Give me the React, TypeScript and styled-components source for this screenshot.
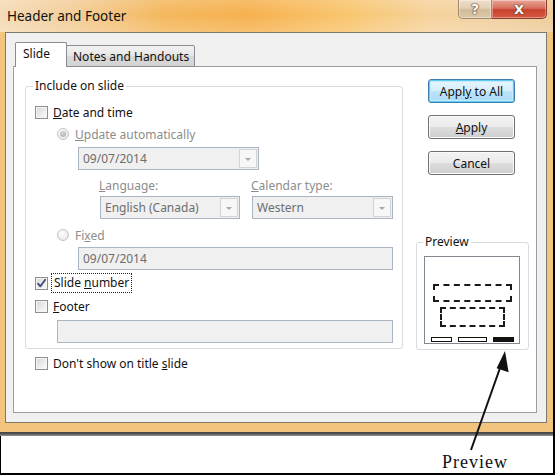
import React from 'react'
import styled, { createGlobalStyle } from 'styled-components'

const GlobalStyle = createGlobalStyle`
  html, body {
    margin: 0;
    padding: 0;
    background: #fff;
  }
  body {
    font-family: 'Noto Sans', 'Open Sans', sans-serif;
    font-size: 12px;
    color: #111;
  }
`

const Page = styled.div`
  position: relative;
  width: 555px;
  height: 475px;
  box-sizing: border-box;
  border-right: 2px solid #000;
  display: flex;
  flex-direction: column;
  background: #fff;
  overflow: hidden;
`

const Window = styled.div`
  height: 432px;
  display: flex;
  flex-direction: column;
  background: #f3c47e;
`

const TitleBar = styled.div`
  height: 32px;
  flex-shrink: 0;
  display: flex;
  align-items: flex-start;
  justify-content: space-between;
  padding-left: 7px;
  padding-right: 6px;
  background:
    linear-gradient(180deg, rgba(255, 255, 255, 0.15) 0%, rgba(255, 255, 255, 0) 45%, rgba(255, 255, 255, 0.18) 100%),
    linear-gradient(90deg, #f4dbb6 0%, #f3cf9c 12%, #f4b75c 30%, #f6b14f 45%, #f8c46c 62%, #f6d39d 78%, #f1d0a0 90%, #eecb98 100%);
`

const Title = styled.span`
  font-size: 13.5px;
  line-height: 32px;
  color: #111;
`

const CaptionButtons = styled.div`
  display: flex;
  height: 19px;
`

const CaptionButton = styled.div<{ $close?: boolean }>`
  width: ${p => (p.$close ? 55 : 34)}px;
  height: 19px;
  box-sizing: border-box;
  display: flex;
  align-items: center;
  justify-content: center;
  border: 1px solid ${p => (p.$close ? '#8e3a2c' : '#9c8a72')};
  border-top: none;
  border-left: ${p => (p.$close ? 'none' : undefined)};
  border-radius: ${p => (p.$close ? '0 0 5px 0' : '0 0 0 5px')};
  background: ${p =>
    p.$close
      ? 'linear-gradient(180deg, #e9a598 0%, #d9705d 45%, #c7412c 55%, #d65a41 100%)'
      : 'linear-gradient(180deg, #efe0cb 0%, #e2cfb3 45%, #d2bb9a 55%, #dcc8aa 100%)'};
  box-shadow: inset 0 0 0 1px rgba(255, 255, 255, 0.35);
  color: #fff;
  font-family: 'DejaVu Sans', sans-serif;
  font-weight: bold;
  font-size: ${p => (p.$close ? 13 : 14)}px;
  text-shadow: 0 0 1px #4a3a2a, 0 0 1px #4a3a2a, 0 0 2px #6a4a3a;
`

const Body = styled.div`
  flex: 1;
  display: flex;
  padding: 0 6px 9px 5px;
`

const Client = styled.div`
  flex: 1;
  display: flex;
  flex-direction: column;
  box-sizing: border-box;
  border: 1px solid #7d776c;
  background: #f0f0f0;
  padding: 9px 9px 9px 7px;
`

const Shadow = styled.div`
  height: 4px;
  background: linear-gradient(180deg, #3e3e3e 0%, #5a5a5a 50%, #9a9a9a 100%);
`

const TabStrip = styled.div`
  display: flex;
  align-items: flex-end;
  height: 25px;
  padding-left: 2px;
  position: relative;
  z-index: 1;
`

const Tab = styled.div<{ $active?: boolean }>`
  height: ${p => (p.$active ? 25 : 22)}px;
  width: ${p => (p.$active ? 52 : 129)}px;
  margin-left: ${p => (p.$active ? 0 : -1)}px;
  box-sizing: border-box;
  display: flex;
  align-items: center;
  padding: ${p => (p.$active ? '0 0 3px 7px' : '0 0 0 6px')};
  border: 1px solid #898c95;
  border-bottom: ${p => (p.$active ? 'none' : '1px solid #898c95')};
  border-radius: 2px 2px 0 0;
  background: ${p => (p.$active ? '#fff' : 'linear-gradient(180deg, #f2f2f2 0%, #e6e6e6 50%, #d9d9d9 50%, #d3d3d3 100%)')};
  position: relative;
  z-index: ${p => (p.$active ? 2 : 1)};
  color: #111;
`

const Panel = styled.div`
  flex: 1;
  margin-top: -1px;
  box-sizing: border-box;
  border: 1px solid #9a9da3;
  background: #fff;
  display: flex;
  padding: 11px 0 0 11px;
`

const LeftColumn = styled.div`
  width: 378px;
  display: flex;
  flex-direction: column;
`

const RightColumn = styled.div`
  width: 113px;
  margin-left: 13px;
  display: flex;
  flex-direction: column;
  padding-top: 1px;
`

const Group = styled.fieldset<{ $pad: number; $top?: number }>`
  margin: ${p => p.$top ?? 0}px 0 0 0;
  min-width: 0;
  box-sizing: border-box;
  border: 1px solid #d5dbe0;
  border-radius: 3px;
  padding: 0 ${p => p.$pad}px 5px ${p => p.$pad}px;
`

const GroupLabel = styled.legend<{ $shift: number }>`
  padding: 0 2px;
  margin-left: ${p => p.$shift}px;
  line-height: 16px;
  color: #111;
`

const OptionRow = styled.div<{ $top: number; $indent?: number; $disabled?: boolean }>`
  display: flex;
  align-items: center;
  gap: 5px;
  height: 20px;
  margin-top: ${p => p.$top}px;
  padding-left: ${p => p.$indent ?? 0}px;
  color: ${p => (p.$disabled ? '#8c8c8c' : '#111')};
`

const CheckBox = styled.span`
  width: 13px;
  height: 13px;
  flex-shrink: 0;
  box-sizing: border-box;
  border: 1px solid #8e8f8f;
  background: linear-gradient(135deg, #d6d6d6 0%, #ececec 55%, #fbfbfb 100%);
  box-shadow: inset 0 0 0 1px #f6f6f6;
  display: flex;
  align-items: center;
  justify-content: center;
`

const Radio = styled.span<{ $checked?: boolean }>`
  width: 12px;
  height: 12px;
  flex-shrink: 0;
  margin-right: 1px;
  box-sizing: border-box;
  border-radius: 50%;
  border: 1px solid #c4c4c4;
  background: radial-gradient(circle at 40% 35%, #fdfdfd 0%, #e4e4e4 100%);
  display: flex;
  align-items: center;
  justify-content: center;

  &::after {
    content: '';
    display: ${p => (p.$checked ? 'block' : 'none')};
    width: 6px;
    height: 6px;
    border-radius: 50%;
    background: radial-gradient(circle at 40% 35%, #d8d8d8 0%, #a8a8a8 100%);
  }
`

const FocusText = styled.span`
  outline: 1px dotted #222;
  outline-offset: 1px;
  padding: 0 1px;
  line-height: 16px;
`

const Field = styled.div<{ $width: number; $left: number; $top?: number }>`
  display: flex;
  align-items: center;
  box-sizing: border-box;
  width: ${p => p.$width}px;
  height: 23px;
  margin-left: ${p => p.$left}px;
  margin-top: ${p => p.$top ?? 0}px;
  border: 1px solid #abb4c2;
  background: #f0f0f0;
  color: #6e6e6e;
  padding: 1px 1px 1px 4px;
`

const FieldText = styled.span`
  flex: 1;
`

const ComboArrow = styled.span`
  width: 18px;
  height: 100%;
  box-sizing: border-box;
  border: 1px solid #d3d3d3;
  background: #f7f7f7;
  display: flex;
  align-items: center;
  justify-content: center;

  &::after {
    content: '';
    border-left: 3.5px solid transparent;
    border-right: 3.5px solid transparent;
    border-top: 3.5px solid #a9a9a9;
    margin-top: 1px;
  }
`

const LangGrid = styled.div`
  display: grid;
  grid-template-columns: 140px 141px;
  column-gap: 12px;
  row-gap: 2px;
  margin-left: 65px;
  margin-top: 8px;
  color: #8c8c8c;
`

const FieldLabel = styled.span`
  line-height: 16px;
  margin-left: -1px;
`

const Button = styled.div<{ $default?: boolean; $top: number }>`
  width: 87px;
  height: 24px;
  margin-left: 12px;
  margin-top: ${p => p.$top}px;
  box-sizing: border-box;
  display: flex;
  align-items: center;
  justify-content: center;
  border-radius: 3px;
  border: 1px solid ${p => (p.$default ? '#3c7fb1' : '#707070')};
  background: ${p =>
    p.$default
      ? 'linear-gradient(180deg, #e6f5fd 0%, #d6eefb 50%, #bde4f8 50%, #a9daf5 100%)'
      : 'linear-gradient(180deg, #f2f2f2 0%, #ebebeb 50%, #dddddd 50%, #cfcfcf 100%)'};
  box-shadow: ${p => (p.$default ? 'inset 0 0 0 1px #5fcbf0, inset 0 0 0 2px #c4ecfb' : 'inset 0 0 0 1px #fbfbfb')};
  color: #111;
`

const PreviewBox = styled.div`
  width: 96px;
  height: 88px;
  margin-top: 6px;
  box-sizing: border-box;
  border: 1px solid #848890;
  background: #fff;
  display: flex;
  flex-direction: column;
`

const DashedArea = styled.div<{ $left: number; $top: number; $width: number; $height: number }>`
  box-sizing: border-box;
  width: ${p => p.$width}px;
  height: ${p => p.$height}px;
  margin-left: ${p => p.$left}px;
  margin-top: ${p => p.$top}px;
  border: 2px dashed #1a1a1a;
`

const FooterBars = styled.div`
  display: flex;
  gap: 6px;
  margin: 10px 0 0 6px;
`

const FooterBar = styled.div<{ $width: number; $filled?: boolean }>`
  width: ${p => p.$width}px;
  height: 5px;
  box-sizing: border-box;
  border: 1px solid #111;
  background: ${p => (p.$filled ? '#111' : '#fff')};
`

const Annotation = styled.div`
  flex: 1;
  box-sizing: border-box;
  border-left: 1px solid #000;
  border-bottom: 2px solid #000;
  padding: 17px 0 0 441px;
`

const Caption = styled.span`
  font-family: 'Liberation Serif', 'DejaVu Serif', serif;
  font-size: 18px;
  line-height: 18px;
  letter-spacing: 1px;
  color: #111;
`

const ArrowLayer = styled.svg`
  position: absolute;
  left: 0;
  top: 0;
  pointer-events: none;
`

const Check = () => (
  <svg width="11" height="11" viewBox="0 0 11 11">
    <path d="M2 5.6 L4.3 8.4 L9.2 1.8" fill="none" stroke="#3d4f7a" strokeWidth="1.8" strokeLinecap="round" strokeLinejoin="round" />
  </svg>
)

export default function App() {
  return (
    <>
      <GlobalStyle />
      <Page>
        <Window>
          <TitleBar>
            <Title>Header and Footer</Title>
            <CaptionButtons>
              <CaptionButton>?</CaptionButton>
              <CaptionButton $close>X</CaptionButton>
            </CaptionButtons>
          </TitleBar>
          <Body>
            <Client>
              <TabStrip>
                <Tab $active>Slide</Tab>
                <Tab>Notes and Handouts</Tab>
              </TabStrip>
              <Panel>
                <LeftColumn>
                  <Group $pad={9}>
                    <GroupLabel $shift={-2}>Include on slide</GroupLabel>
                    <OptionRow $top={8}>
                      <CheckBox />
                      <span><u>D</u>ate and time</span>
                    </OptionRow>
                    <OptionRow $top={2} $indent={22} $disabled>
                      <Radio $checked />
                      <span><u>U</u>pdate automatically</span>
                    </OptionRow>
                    <Field $width={181} $left={43} $top={3}>
                      <FieldText>09/07/2014</FieldText>
                      <ComboArrow />
                    </Field>
                    <LangGrid>
                      <FieldLabel><u>L</u>anguage:</FieldLabel>
                      <FieldLabel><u>C</u>alendar type:</FieldLabel>
                      <Field $width={140} $left={0}>
                        <FieldText>English (Canada)</FieldText>
                        <ComboArrow />
                      </Field>
                      <Field $width={141} $left={0}>
                        <FieldText>Western</FieldText>
                        <ComboArrow />
                      </Field>
                    </LangGrid>
                    <OptionRow $top={6} $indent={22} $disabled>
                      <Radio />
                      <span>Fi<u>x</u>ed</span>
                    </OptionRow>
                    <Field $width={315} $left={43} $top={2}>
                      <FieldText>09/07/2014</FieldText>
                    </Field>
                    <OptionRow $top={3}>
                      <CheckBox>
                        <Check />
                      </CheckBox>
                      <FocusText>Slide <u>n</u>umber</FocusText>
                    </OptionRow>
                    <OptionRow $top={3}>
                      <CheckBox />
                      <span><u>F</u>ooter</span>
                    </OptionRow>
                    <Field $width={336} $left={22} $top={4} />
                  </Group>
                  <OptionRow $top={4} $indent={10}>
                    <CheckBox />
                    <span>Don't show on title <u>s</u>lide</span>
                  </OptionRow>
                </LeftColumn>
                <RightColumn>
                  <Button $default $top={0}><span>Appl<u>y</u> to All</span></Button>
                  <Button $top={12}><span><u>A</u>pply</span></Button>
                  <Button $top={12}><span>Cancel</span></Button>
                  <Group $pad={7} $top={59}>
                    <GroupLabel $shift={-1}>Preview</GroupLabel>
                    <PreviewBox>
                      <DashedArea $left={8} $top={27} $width={79} $height={18} />
                      <DashedArea $left={15} $top={5} $width={65} $height={20} />
                      <FooterBars>
                        <FooterBar $width={21} />
                        <FooterBar $width={29} />
                        <FooterBar $width={21} $filled />
                      </FooterBars>
                    </PreviewBox>
                  </Group>
                </RightColumn>
              </Panel>
            </Client>
          </Body>
        </Window>
        <Shadow />
        <Annotation>
          <Caption>Preview</Caption>
        </Annotation>
        <ArrowLayer width="555" height="475" viewBox="0 0 555 475">
          <line x1="471" y1="450" x2="500" y2="368" stroke="#111" strokeWidth="2" />
          <polygon points="505,351 508.6,372.3 496.6,368.2" fill="#111" />
        </ArrowLayer>
      </Page>
    </>
  )
}
